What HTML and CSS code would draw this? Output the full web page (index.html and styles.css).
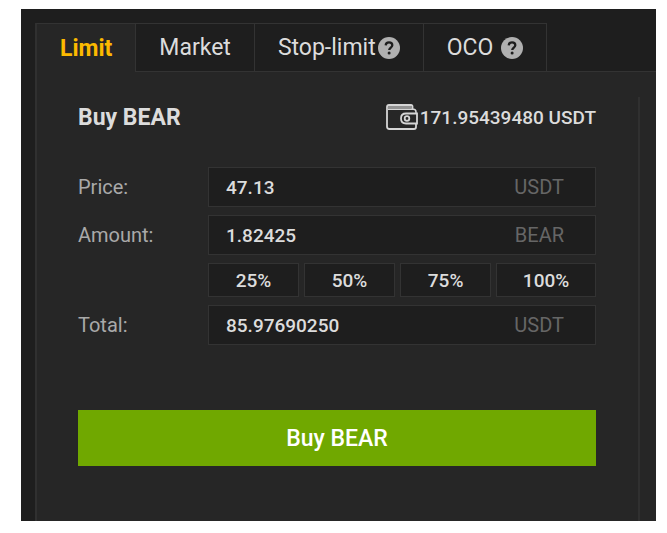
FILE: index.html
```
<!DOCTYPE html>
<html lang="en">
<head>
    <meta charset="UTF-8">
    <meta name="viewport" content="width=device-width, initial-scale=1.0">
    <title>Buy BEAR</title>
    <link rel="stylesheet" href="styles.css">
</head>
<body>
    <main class="trade">
        <div class="tabs" role="tablist">
            <button class="tab active" type="button" role="tab" aria-selected="true">Limit</button>
            <button class="tab" type="button" role="tab" aria-selected="false">Market</button>
            <button class="tab" type="button" role="tab" aria-selected="false">Stop-limit<svg class="help-icon" viewBox="0 0 22 22" aria-hidden="true">
                    <circle cx="11" cy="11" r="11" fill="#b0b0b0"/>
                    <path d="M7.7 8.4C7.8 6.5 9.1 5.4 11 5.4s3.3 1.1 3.3 2.8c0 2.2-3.1 2.5-3.1 4.9" fill="none" stroke="#1e1e1e" stroke-width="2.3"/>
                    <circle cx="11.1" cy="16.1" r="1.5" fill="#1e1e1e"/>
                </svg></button>
            <button class="tab tab-spaced" type="button" role="tab" aria-selected="false">OCO<svg class="help-icon" viewBox="0 0 22 22" aria-hidden="true">
                    <circle cx="11" cy="11" r="11" fill="#b0b0b0"/>
                    <path d="M7.7 8.4C7.8 6.5 9.1 5.4 11 5.4s3.3 1.1 3.3 2.8c0 2.2-3.1 2.5-3.1 4.9" fill="none" stroke="#1e1e1e" stroke-width="2.3"/>
                    <circle cx="11.1" cy="16.1" r="1.5" fill="#1e1e1e"/>
                </svg></button>
        </div>

        <div class="panel">
            <form class="order-form">
                <div class="form-header">
                    <h1 class="form-title">Buy BEAR</h1>
                    <div class="balance">
                        <svg class="wallet-icon" viewBox="0 0 32 26" fill="none" stroke="#d5d5d5" aria-hidden="true">
                            <path d="M26.500 5V2.500Q26.500 1 25 1H3Q1 1 1 3V22.500Q1 25 3.500 25H28Q30 25 30 23V20" stroke-width="1.800"/>
                            <path d="M2 3.200H26" stroke="#929292" stroke-width="2.400"/>
                            <path d="M2 5.200H27.500Q30 5.200 30 8V10" stroke-width="1.500"/>
                            <path d="M31 9.500H20Q15 9.500 15 14.500T20 19.500H31Z" stroke-width="1.800"/>
                            <circle cx="21" cy="14.500" r="2.300" stroke-width="1.800"/>
                        </svg>
                        <span>171.95439480 USDT</span>
                    </div>
                </div>

                <div class="form-row">
                    <label class="form-label" for="price">Price:</label>
                    <div class="field">
                        <input class="field-input" id="price" type="text" value="47.13">
                        <span class="field-unit">USDT</span>
                    </div>
                </div>
                <div class="form-row">
                    <label class="form-label" for="amount">Amount:</label>
                    <div class="field">
                        <input class="field-input" id="amount" type="text" value="1.82425">
                        <span class="field-unit">BEAR</span>
                    </div>
                </div>
                <div class="form-row">
                    <div class="percents">
                        <button class="percent" type="button">25%</button>
                        <button class="percent" type="button">50%</button>
                        <button class="percent" type="button">75%</button>
                        <button class="percent percent-full" type="button">100%</button>
                    </div>
                </div>
                <div class="form-row">
                    <label class="form-label" for="total">Total:</label>
                    <div class="field">
                        <input class="field-input" id="total" type="text" value="85.97690250">
                        <span class="field-unit">USDT</span>
                    </div>
                </div>

                <button class="buy-btn" type="button">Buy BEAR</button>
            </form>
        </div>
    </main>
</body>
</html>
```
FILE: styles.css
```
* {
    margin: 0;
    padding: 0;
    box-sizing: border-box;
}

body {
    font-family: Roboto, "Liberation Sans", sans-serif;
    background: #fff;
    color: #dcdcdc;
    min-height: 100vh;
    display: flex;
    padding: 9px 11px 12px 21px;
}

button,
input {
    font-family: inherit;
    color: inherit;
}

button {
    cursor: pointer;
}

.trade {
    flex: 1;
    min-width: 0;
    display: flex;
    flex-direction: column;
    background: #1e1e1e;
    padding: 14px 0 0 14px;
}

/* Tabs */
.tabs {
    display: flex;
}

.tab {
    display: flex;
    align-items: center;
    gap: 2px;
    height: 48px;
    padding: 0 23px;
    background: #1e1e1e;
    border: 1px solid #333;
    border-left: none;
    border-bottom: none;
    font-size: 23px;
}

.tab.active {
    height: 49px;
    margin-bottom: -1px;
    position: relative;
    background: #262626;
    border-left: 2px solid #303030;
    color: #fcb900;
    font-weight: 700;
}

.tab-spaced {
    gap: 8px;
}

.help-icon {
    width: 22px;
    height: 22px;
}

/* Order panel */
.panel {
    flex: 1;
    display: flex;
    background: #262626;
    border-top: 1px solid #333;
    border-left: 2px solid #303030;
    padding: 25px 16px 0 0;
}

.order-form {
    flex: 1;
    min-width: 0;
    display: flex;
    flex-direction: column;
    gap: 8px;
    padding: 0 42px 24px 41px;
    border-right: 2px solid #303030;
}

.form-header {
    display: flex;
    align-items: center;
    justify-content: space-between;
    height: 40px;
    margin-bottom: 22px;
}

.form-title {
    font-size: 23px;
    font-weight: 700;
}

.balance {
    display: flex;
    align-items: center;
    gap: 2px;
    font-size: 19px;
    font-weight: 500;
}

.wallet-icon {
    width: 32px;
    height: 26px;
}

.form-row {
    display: flex;
}

.form-label {
    width: 130px;
    font-size: 20px;
    line-height: 40px;
    color: #a9a9a9;
}

.field {
    flex: 1;
    min-width: 0;
    display: flex;
    align-items: center;
    height: 40px;
    padding: 0 31px 0 17px;
    background: #1e1e1e;
    border: 1px solid #333;
}

.field-input {
    flex: 1;
    min-width: 0;
    background: none;
    border: none;
    outline: none;
    font-size: 19px;
    font-weight: 500;
}

.field-unit {
    font-size: 20px;
    color: #666;
}

.percents {
    flex: 1;
    display: flex;
    gap: 5px;
    margin-left: 130px;
}

.percent {
    flex: 10;
    height: 34px;
    background: #1e1e1e;
    border: 1px solid #333;
    font-size: 19px;
    font-weight: 500;
}

.percent-full {
    flex: 11;
}

.buy-btn {
    height: 56px;
    margin-top: 57px;
    background: #70a800;
    border: none;
    color: #fff;
    font-size: 23px;
    font-weight: 500;
}
```
